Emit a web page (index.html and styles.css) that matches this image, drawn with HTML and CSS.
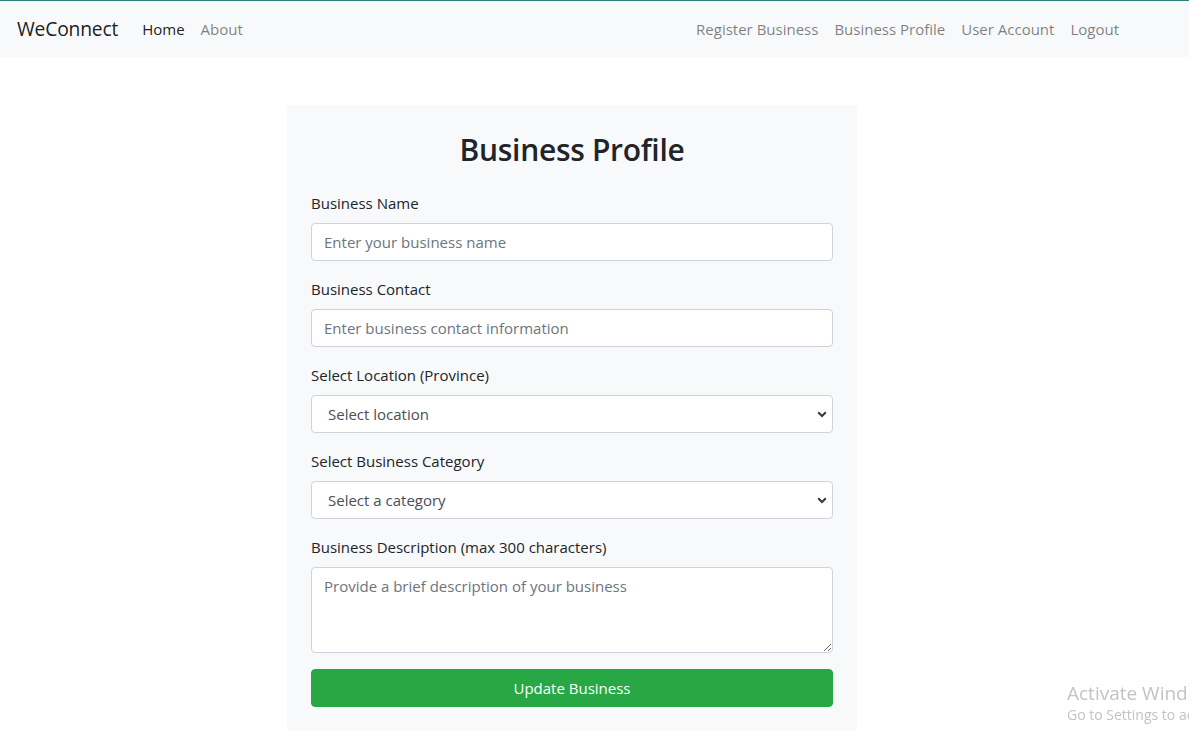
FILE: index.html
```html
<!DOCTYPE html>
<html lang="en">
<head>
<meta charset="utf-8">
<title>WeConnect - Business Profile</title>
<link rel="stylesheet" href="styles.css">
</head>
<body>
<nav class="navbar">
  <a class="brand" href="#">WeConnect</a>
  <ul class="nav">
    <li><a class="nav-link active" href="#">Home</a></li>
    <li><a class="nav-link" href="#">About</a></li>
  </ul>
  <ul class="nav nav-right">
    <li><a class="nav-link" href="#">Register Business</a></li>
    <li><a class="nav-link" href="#">Business Profile</a></li>
    <li><a class="nav-link" href="#">User Account</a></li>
    <li><a class="nav-link" href="#">Logout</a></li>
  </ul>
</nav>

<main class="page">
  <form class="card">
    <h1 class="title">Business Profile</h1>
    <div class="group">
      <label class="label" for="bname">Business Name</label>
      <input class="control" id="bname" type="text" placeholder="Enter your business name">
    </div>
    <div class="group">
      <label class="label" for="bcontact">Business Contact</label>
      <input class="control" id="bcontact" type="text" placeholder="Enter business contact information">
    </div>
    <div class="group">
      <label class="label" for="bloc">Select Location (Province)</label>
      <div class="select-wrap">
        <select class="control select" id="bloc">
          <option>Select location</option>
        </select>
        <svg class="chev" width="10" height="7" viewBox="0 0 10 7"><path d="M1.2 1.2 L5 5 L8.8 1.2" fill="none" stroke="#343a40" stroke-width="2"/></svg>
      </div>
    </div>
    <div class="group">
      <label class="label" for="bcat">Select Business Category</label>
      <div class="select-wrap">
        <select class="control select" id="bcat">
          <option>Select a category</option>
        </select>
        <svg class="chev" width="10" height="7" viewBox="0 0 10 7"><path d="M1.2 1.2 L5 5 L8.8 1.2" fill="none" stroke="#343a40" stroke-width="2"/></svg>
      </div>
    </div>
    <div class="group">
      <label class="label" for="bdesc">Business Description (max 300 characters)</label>
      <textarea class="control textarea" id="bdesc" rows="3" placeholder="Provide a brief description of your business"></textarea>
    </div>
    <button class="btn" type="button">Update Business</button>
  </form>
</main>

<div class="watermark">
  <div class="wm-title">Activate Windows</div>
  <div class="wm-sub">Go to Settings to activate Windows.</div>
</div>
</body>
</html>
```

FILE: styles.css
```css
* { box-sizing: border-box; }
html, body { margin: 0; padding: 0; }
body {
  font-family: "Open Sans", "Noto Sans", sans-serif;
  font-size: 16px;
  line-height: 1.5;
  color: #212529;
  background: #fff;
  overflow: hidden;
  height: 743px;
}
.navbar {
  display: flex;
  align-items: center;
  height: 57px;
  padding: 8px 62px 8px 17px;
  background: #f8f9fa;
  border-top: 1px solid #2b7f7d;
}
.brand {
  font-size: 19.3px;
  color: rgba(0,0,0,.9);
  text-decoration: none;
  margin-right: 16px;
  letter-spacing: -0.2px;
}
.nav {
  display: flex;
  list-style: none;
  margin: 0;
  padding: 0;
}
.nav-right { margin-left: auto; }
.nav-link {
  display: block;
  padding: 8px 8px;
  color: rgba(0,0,0,.5);
  text-decoration: none;
  font-size: 15px;
}
.nav-link.active { color: rgba(0,0,0,.9); }

.page {
  display: flex;
  justify-content: flex-start;
  padding-left: 287px;
  padding-top: 48px;
}
.card {
  width: 570px;
  background: #f8f9fa;
  border-radius: 5px;
  padding: 24px;
}
.title {
  margin: 2px 0 22px;
  text-align: center;
  font-size: 30px;
  font-weight: 600;
  line-height: 38px;
  letter-spacing: -0.3px;
}
.group { margin-bottom: 16px; }
.label {
  display: block;
  margin-bottom: 8px;
  font-size: 15px;
  line-height: 24px;
}
.control {
  display: block;
  width: 100%;
  height: 38px;
  padding: 6px 12px;
  font-family: inherit;
  font-size: 15px;
  line-height: 24px;
  color: #495057;
  background: #fff;
  border: 1px solid #ced4da;
  border-radius: 4px;
  outline: none;
}
.control::placeholder { color: #6c757d; opacity: 1; }
.select-wrap { position: relative; }
.select {
  -webkit-appearance: none;
  appearance: none;
  padding-left: 16px;
  color: #495057;
}
.chev {
  position: absolute;
  right: 6px;
  top: 16px;
  pointer-events: none;
}
.textarea {
  height: 86px;
  resize: vertical;
}
.btn {
  display: block;
  width: 100%;
  height: 38px;
  font-family: inherit;
  font-size: 15px;
  line-height: 24px;
  color: #fff;
  background: #28a745;
  border: 1px solid #28a745;
  border-radius: 4px;
  cursor: pointer;
}
.watermark {
  position: fixed;
  left: 1067px;
  top: 681px;
  white-space: nowrap;
  color: #c3c3c3;
  font-family: "Open Sans", sans-serif;
}
.wm-title { font-size: 19px; line-height: 24px; }
.wm-sub { font-size: 14px; line-height: 20px; }
```
